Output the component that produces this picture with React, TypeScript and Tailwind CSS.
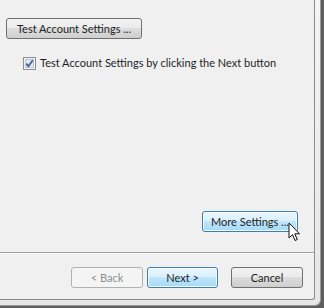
const btn =
  'h-[21px] flex items-center justify-center rounded-[3px] border text-[11px] leading-none';
const normal =
  'border-[#707070] bg-[linear-gradient(#f2f2f2_0%,#ebebeb_49%,#dddddd_50%,#cfcfcf_100%)] text-[#1e1e1e]';
const hot =
  'border-[#3c7fb1] bg-[linear-gradient(#eaf6fd_0%,#d9f0fc_49%,#bee6fd_50%,#a7d9f5_100%)] text-[#1e1e1e] shadow-[inset_0_0_0_1px_#f4fbff]';
const disabled = 'border-[#adb2b5] bg-[#f4f4f4] text-[#8d8d8d]';

const CheckBox = () => (
  <svg width="13" height="13" viewBox="0 0 13 13">
    <rect x="0.5" y="0.5" width="12" height="12" fill="#f4f4f4" stroke="#8e8f8f" />
    <rect x="2.5" y="2.5" width="8" height="8" fill="#dfe8f3" stroke="#b9c7d8" />
    <path d="M3.3 6.6 L5.4 9.2 L9.8 3.3" fill="none" stroke="#4a5f97" strokeWidth="1.8" />
  </svg>
);

const Cursor = () => (
  <svg width="14" height="21" viewBox="0 0 14 21" className="absolute left-[288px] top-[222px]">
    <path
      d="M1 1 L1 16 L4.5 12.5 L7 18.5 L9.3 17.5 L6.8 11.8 L11.5 11.8 Z"
      fill="#ffffff"
      stroke="#111111"
      strokeWidth="1"
      strokeLinejoin="round"
    />
  </svg>
);

export default function App() {
  return (
    <div
      className="relative w-[324px] h-[308px] bg-[#5e5e5e] pr-[3px] pb-[2px]"
      style={{ fontFamily: 'Lato, "Noto Sans", sans-serif' }}
    >
      <div className="h-full bg-[linear-gradient(#f4f4f4,#e6e6e6)] pr-[5px] pb-[5px] rounded-br-[6px] border-r border-b border-[#9a9a9a]">
        <div className="h-full flex flex-col bg-[#f0f0f0] border-r border-b border-[#8c8c8c] rounded-br-[3px]">
          <div className="flex-1 flex flex-col">
            <div className="pt-[18px] pl-[6px]">
              <div className={`${btn} ${normal} w-[136px]`}>Test Account Settings ...</div>
            </div>
            <label className="mt-[16px] ml-[23px] flex items-center gap-[4px] text-[11px] text-[#1e1e1e]">
              <CheckBox />
              <span>Test Account Settings by clicking the Next button</span>
            </label>
            <div className="mt-auto mb-[20px] flex justify-end pr-[16px]">
              <div className={`${btn} ${hot} w-[96px] h-[20px]`}>More Settings ...</div>
            </div>
          </div>
          <div className="border-t border-[#a0a0a0] shadow-[inset_0_1px_0_#ffffff] h-[47px] flex items-start pt-[14px] pl-[71px]">
            <div className={`${btn} ${disabled} w-[72px]`}>&lt; Back</div>
            <div className={`${btn} ${hot} w-[71px] ml-[4px]`}>Next &gt;</div>
            <div className={`${btn} ${normal} w-[72px] ml-[13px]`}>Cancel</div>
          </div>
        </div>
      </div>
      <Cursor />
    </div>
  );
}
